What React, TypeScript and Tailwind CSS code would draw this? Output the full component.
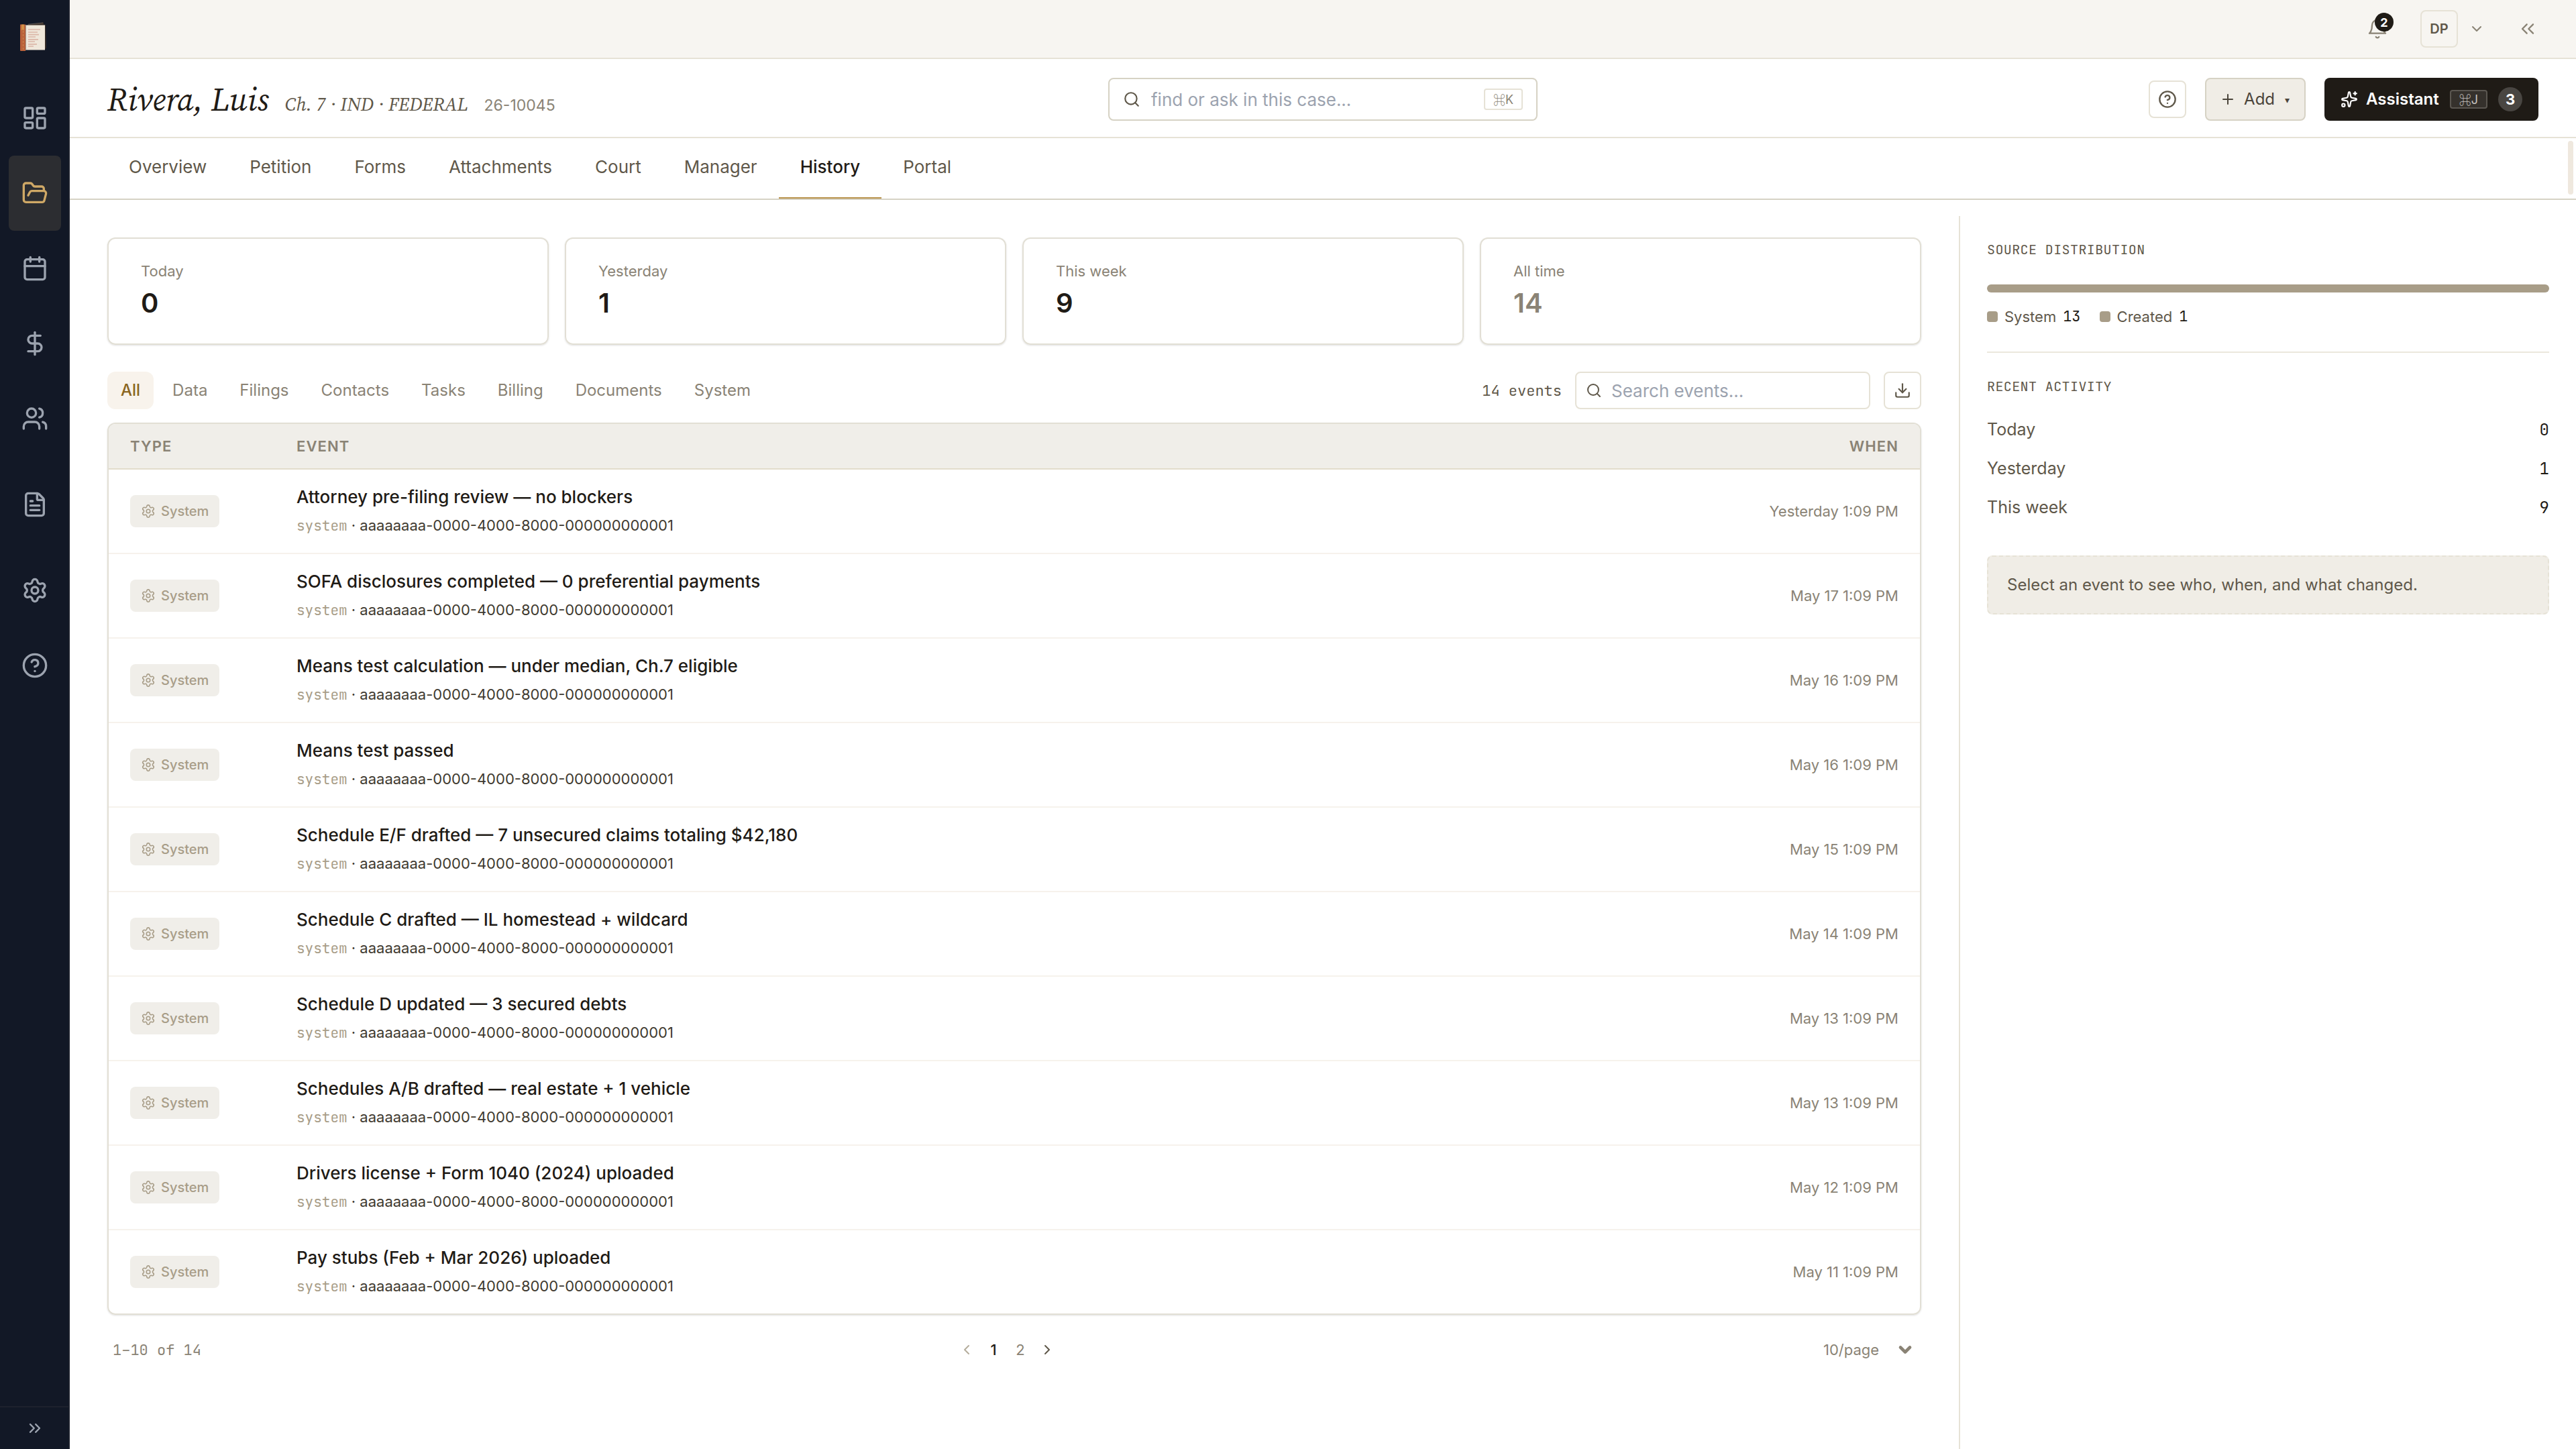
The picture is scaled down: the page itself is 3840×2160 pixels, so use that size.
import { useId, useState } from "react";
import {
    Calendar,
    ChevronDown,
    ChevronLeft,
    ChevronRight,
    ChevronsLeft,
    ChevronsRight,
    CircleQuestionMark,
    DollarSign,
    Download,
    FileText,
    FolderOpen,
    LayoutDashboard,
    Plus,
    Search,
    Settings,
    Sparkles,
    Users,
} from "lucide-react";
import { clsx } from "clsx";

const mono = "font-['JetBrains_Mono','DejaVu_Sans_Mono',monospace]";
const serif = "font-['Source_Serif_4','Noto_Serif','Liberation_Serif',serif]";

const navItems = [
    { name: "Dashboard", icon: LayoutDashboard },
    { name: "Cases", icon: FolderOpen, active: true },
    { name: "Calendar", icon: Calendar },
    { name: "Billing", icon: DollarSign },
    { name: "Contacts", icon: Users },
    { name: "Documents", icon: FileText, spaced: true },
    { name: "Settings", icon: Settings, spaced: true },
    { name: "Help", icon: CircleQuestionMark },
];

const tabs = ["Overview", "Petition", "Forms", "Attachments", "Court", "Manager", "History", "Portal"];

const stats = [
    { label: "Today", value: 0 },
    { label: "Yesterday", value: 1 },
    { label: "This week", value: 9 },
    { label: "All time", value: 14, muted: true },
];

const filters = ["All", "Data", "Filings", "Contacts", "Tasks", "Billing", "Documents", "System"];

const events = [
    { title: "Attorney pre-filing review — no blockers", when: "Yesterday 1:09 PM" },
    { title: "SOFA disclosures completed — 0 preferential payments", when: "May 17 1:09 PM" },
    { title: "Means test calculation — under median, Ch.7 eligible", when: "May 16 1:09 PM" },
    { title: "Means test passed", when: "May 16 1:09 PM" },
    { title: "Schedule E/F drafted — 7 unsecured claims totaling $42,180", when: "May 15 1:09 PM" },
    { title: "Schedule C drafted — IL homestead + wildcard", when: "May 14 1:09 PM" },
    { title: "Schedule D updated — 3 secured debts", when: "May 13 1:09 PM" },
    { title: "Schedules A/B drafted — real estate + 1 vehicle", when: "May 13 1:09 PM" },
    { title: "Drivers license + Form 1040 (2024) uploaded", when: "May 12 1:09 PM" },
    { title: "Pay stubs (Feb + Mar 2026) uploaded", when: "May 11 1:09 PM" },
];

const ACTOR_ID = "aaaaaaaa-0000-4000-8000-000000000001";

function Logo() {
    return (
        <svg viewBox="0 0 40 44" className="h-11 w-10" aria-hidden="true">
            <path d="M10 5 35 1.500v3l3 .5 1 34-2 3H9z" fill="#3a2f28" />
            <path d="M12 4.200 34 2" stroke="#8c8177" strokeWidth=".6" />
            <path d="M8 5.500h29v37H8z" fill="#efe7da" />
            <path d="M0 4.500h8V44H1a1 1 0 0 1-1-1z" fill="#b9613a" />
            <path d="M2 4.500h4v9l-2-1.500-2 1.500z" fill="#d29045" />
            <path d="M4.500 14v28" stroke="#cf8a4e" strokeWidth="1" strokeDasharray="3 2" />
            <path d="M8.500 5v38" stroke="#8f8377" strokeWidth=".8" />
            <path
                d="M12 12h18M12 16h14M12 19.700h16M12 23h11M12 26.800h15M12 30h10M12 33.800h13M12 37h8"
                stroke="#dcb7a8"
                strokeWidth="1.700"
            />
        </svg>
    );
}

// the badge covers the upper right of the bell
function BellIcon() {
    return (
        <svg
            viewBox="0 0 24 24"
            className="size-8"
            fill="none"
            stroke="currentColor"
            strokeWidth="1.75"
            strokeLinecap="round"
            strokeLinejoin="round"
            aria-hidden="true"
        >
            <path d="M6 8a6 6 0 0 1 12 0c0 7 3 9 3 9H3s3-2 3-9" />
            <path d="M10.300 21a1.940 1.940 0 0 0 3.400 0" />
        </svg>
    );
}

function CommandKey({ letter }: { letter: string }) {
    return (
        <>
            <span className="font-['Noto_Sans_CJK_SC',sans-serif]">⌘</span>
            <span className="font-['Inter',sans-serif]">{letter}</span>
        </>
    );
}

function Sidebar() {
    return (
        <aside className="flex w-[104px] shrink-0 flex-col bg-[#121826] shadow-[inset_-2px_0_#1d212d]">
            <div className="h-[120px] shrink-0 pt-8 pl-[30px]">
                <Logo />
            </div>
            <nav className="flex flex-1 flex-col px-[13px]">
                {navItems.map((item) => {
                    const Icon = item.icon;
                    return (
                        <a
                            key={item.name}
                            href="#"
                            aria-label={item.name}
                            className={clsx(
                                "flex h-28 items-center justify-center rounded-lg",
                                item.spaced && "mt-4",
                                item.active ? "bg-[#2c2d31] text-[#cfa866]" : "text-[#9ca3af]"
                            )}
                        >
                            <Icon className="size-10" strokeWidth={2} />
                        </a>
                    );
                })}
            </nav>
            <button
                aria-label="Expand sidebar"
                className="flex h-16 items-center justify-center border-t-2 border-[#1d212d] text-[#9ca3af]"
            >
                <ChevronsRight className="size-7" />
            </button>
        </aside>
    );
}

function TopBar() {
    return (
        <div className="flex h-[88px] items-center justify-end border-b-2 border-[#e6e2d6] bg-[#f7f5f1] pr-14">
            <button aria-label="Notifications" className="relative mr-12 text-[#8a8375]">
                <BellIcon />
                <span className="absolute -top-2 left-3 flex size-7 items-center justify-center rounded-full bg-[#1f1b16] text-[18px] font-bold text-white">
                    2
                </span>
            </button>
            <button className="flex items-center gap-4 text-[#8a8375]">
                <span className="flex size-14 items-center justify-center rounded-lg border-2 border-[#e6e2d6] text-[20px] font-semibold text-[#5f584a]">
                    DP
                </span>
                <ChevronDown className="size-6" />
            </button>
            <button aria-label="Collapse panel" className="ml-12 text-[#8a8375]">
                <ChevronsLeft className="size-8" strokeWidth={1.75} />
            </button>
        </div>
    );
}

function CaseHeader() {
    const id = useId();
    return (
        <header className="grid h-[118px] grid-cols-[1fr_640px_1fr] items-center border-b-2 border-[#e6e2d6] px-14 pt-1">
            <div className="flex items-baseline gap-6">
                <h1 className={clsx(serif, "text-[48px] italic text-[#1f1b16]")}>Rivera, Luis</h1>
                <p className={clsx(serif, "text-[28px] italic text-[#5f584a]")}>Ch. 7 · IND · FEDERAL</p>
                <p className="text-[23px] text-[#8a8375]">26-10045</p>
            </div>
            <div className="flex h-16 items-center rounded-lg border-2 border-[#d6d2c4] px-5">
                <label htmlFor={id} aria-label="Find or ask in this case">
                    <Search className="size-[26px] text-[#5f584a]" />
                </label>
                <input
                    id={id}
                    type="text"
                    placeholder="find or ask in this case..."
                    className="ml-4 min-w-0 flex-1 text-[26px] outline-none placeholder:text-[#9ca3af]"
                />
                <kbd className="flex h-8 items-center rounded border-2 border-[#e6e2d6] px-3 text-[18px] text-[#8a8375]">
                    <CommandKey letter="K" />
                </kbd>
            </div>
            <div className="flex items-center justify-end gap-7">
                <button
                    aria-label="Help"
                    className="flex size-14 items-center justify-center rounded-lg border-2 border-[#e6e2d6] text-[#5f584a]"
                >
                    <CircleQuestionMark className="size-7" />
                </button>
                <button className="flex h-16 items-center gap-3 rounded-lg border-2 border-[#d6d2c4] bg-[#f0ede6] px-5 text-[24px] text-[#4a443a]">
                    <Plus className="size-6" />
                    <span>Add</span>
                    <span className="w-3 text-center text-[14px]">▾</span>
                </button>
                <button className="flex h-16 items-center gap-4 rounded-lg bg-[#1f1b16] px-6 text-[24px] font-semibold text-white">
                    <span className="flex items-center gap-3">
                        <Sparkles className="size-[26px]" />
                        Assistant
                    </span>
                    <kbd className="flex h-7 items-center rounded border-2 border-[#5b5751] bg-[#35312c] px-3 text-[18px] font-normal text-[#c5c3c0]">
                        <CommandKey letter="J" />
                    </kbd>
                    <span className="flex size-9 items-center justify-center rounded-full bg-[#494642] text-[22px] font-bold">
                        3
                    </span>
                </button>
            </div>
        </header>
    );
}

function Tabs() {
    const [active, setActive] = useState("History");
    return (
        <nav className="flex h-[92px] justify-between border-b-2 border-[#d6d2c4] pl-14 pr-1">
            <div className="flex">
                {tabs.map((tab) => (
                    <button
                        key={tab}
                        onClick={() => setActive(tab)}
                        className={clsx(
                            "border-b-2 px-8 pb-1 text-[26px]",
                            active === tab
                                ? "border-[#b8924a] font-medium text-[#1f1b16]"
                                : "border-transparent text-[#5f584a]"
                        )}
                    >
                        {tab}
                    </button>
                ))}
            </div>
            <span className="mt-1 h-20 w-2 rounded bg-[#efe8de]" />
        </nav>
    );
}

function Stats() {
    return (
        <dl className="grid grid-cols-4 gap-6">
            {stats.map((stat) => (
                <div
                    key={stat.label}
                    className="flex h-40 flex-col justify-center rounded-xl border-2 border-[#e2dfd5] px-12 shadow-sm"
                >
                    <dt className="text-[22px] leading-8 text-[#8a8375]">{stat.label}</dt>
                    <dd
                        className={clsx(
                            "mt-1 text-[40px] leading-[56px] font-semibold",
                            stat.muted ? "text-[#8a8375]" : "text-[#1f1b16]"
                        )}
                    >
                        {stat.value}
                    </dd>
                </div>
            ))}
        </dl>
    );
}

function Toolbar() {
    const id = useId();
    const [active, setActive] = useState("All");
    return (
        <div className="mt-10 flex h-14 items-center justify-between">
            <div className="flex gap-2">
                {filters.map((filter) => (
                    <button
                        key={filter}
                        onClick={() => setActive(filter)}
                        className={clsx(
                            "h-14 rounded-xl px-5 text-[24px]",
                            active === filter ? "bg-[#f8f3ec] font-medium text-[#8a6520]" : "text-[#8a8375]"
                        )}
                    >
                        {filter}
                    </button>
                ))}
            </div>
            <div className="flex items-center gap-5">
                <span className={clsx(mono, "text-[22px] text-[#5f584a]")}>14 events</span>
                <div className="flex h-14 w-[440px] items-center rounded-lg border-2 border-[#e6e2d6] pl-3.5">
                    <label htmlFor={id} aria-label="Search events">
                        <Search className="size-6 text-[#5f584a]" />
                    </label>
                    <input
                        id={id}
                        type="text"
                        placeholder="Search events..."
                        className="ml-3.5 min-w-0 flex-1 text-[26px] outline-none placeholder:text-[#9ca3af]"
                    />
                </div>
                <button
                    aria-label="Download"
                    className="flex size-14 items-center justify-center rounded-lg border-2 border-[#e6e2d6] text-[#5f584a]"
                >
                    <Download className="size-[26px]" />
                </button>
            </div>
        </div>
    );
}

function EventTable() {
    return (
        <div className="mt-5 overflow-hidden rounded-xl border-2 border-[#e2dfd5] shadow-sm">
            <table className="w-full border-separate border-spacing-0 text-left">
                <thead className="bg-[#f0eee9] text-[22px] tracking-wider text-[#8a8375]">
                    <tr className="*:h-[68px] *:border-b-2 *:border-[#e2dccb] *:font-semibold">
                        <th className="w-[248px] pl-8">TYPE</th>
                        <th className="pl-8">EVENT</th>
                        <th className="pr-8 text-right">WHEN</th>
                    </tr>
                </thead>
                <tbody>
                    {events.map((event) => (
                        <tr
                            key={event.title}
                            className="*:h-[126px] *:border-b-2 *:border-[#f6f2ec] last:*:h-[124px] last:*:border-b-0"
                        >
                            <td className="pl-8">
                                <span className="inline-flex h-12 items-center gap-2 rounded-lg bg-[#f0eee9] px-4 align-middle text-[20px] font-medium text-[#a89d88]">
                                    <Settings className="size-[22px]" strokeWidth={1.75} />
                                    System
                                </span>
                            </td>
                            <td className="pl-8">
                                <p className="text-[26px] leading-9 font-medium text-[#1f1b16]">{event.title}</p>
                                <p className="mt-1.5 text-[22px] leading-9 text-[#3f3a30]">
                                    <span className={clsx(mono, "text-[21px] text-[#a89d88]")}>system</span> · {ACTOR_ID}
                                </p>
                            </td>
                            <td className="pr-8 text-right text-[22px] text-[#8a8375]">{event.when}</td>
                        </tr>
                    ))}
                </tbody>
            </table>
        </div>
    );
}

function Pagination() {
    return (
        <div className="mt-5 flex h-16 items-center justify-between px-2 text-[22px] text-[#8a8375]">
            <span className={mono}>1–10 of 14</span>
            <div className="flex items-center gap-4 *:flex *:w-6 *:justify-center">
                <button aria-label="Previous page" className="text-[#b5ad9c]">
                    <ChevronLeft className="size-6" />
                </button>
                <button className="font-medium text-[#1f1b16]">1</button>
                <button>2</button>
                <button aria-label="Next page" className="text-[#5f584a]">
                    <ChevronRight className="size-6" />
                </button>
            </div>
            <div className="relative flex items-center">
                <select aria-label="Rows per page" className="w-[154px] appearance-none pl-4 outline-none">
                    <option>10/page</option>
                    <option>25/page</option>
                </select>
                <ChevronDown className="pointer-events-none absolute right-0.5 size-7" strokeWidth={4} />
            </div>
        </div>
    );
}

function DetailPanel() {
    const heading = clsx(mono, "text-[20px] leading-8 tracking-[0.02em] text-[#5f584a]");
    return (
        <aside className="mt-6 w-[920px] shrink-0 border-l-2 border-[#e6e2d6] px-10 pt-[34px]">
            <section className="border-b-2 border-[#ebe8dd] pb-9">
                <h2 className={heading}>SOURCE DISTRIBUTION</h2>
                <div className="mt-9 h-3 rounded-md bg-[#a89d88]" />
                <div className="mt-5 flex gap-7 text-[22px] leading-8 text-[#5f584a]">
                    {[
                        { label: "System", count: 13 },
                        { label: "Created", count: 1 },
                    ].map((source) => (
                        <span key={source.label} className="flex items-center gap-2.5">
                            <span className="size-4 rounded bg-[#a89d88]" />
                            {source.label}
                            <span className={clsx(mono, "text-[#1f1b16]")}>{source.count}</span>
                        </span>
                    ))}
                </div>
            </section>
            <section className="pt-[34px]">
                <h2 className={heading}>RECENT ACTIVITY</h2>
                <dl className="mt-5">
                    {stats.slice(0, 3).map((stat) => (
                        <div key={stat.label} className="flex h-[58px] items-center justify-between text-[25px]">
                            <dt className="text-[#5f584a]">{stat.label}</dt>
                            <dd className={clsx(mono, "text-[24px] text-[#1f1b16]")}>{stat.value}</dd>
                        </div>
                    ))}
                </dl>
            </section>
            <p className="mt-[42px] flex h-[88px] items-center rounded-lg border-2 border-dashed border-[#e6e2d6] bg-[#f0ede6] px-7 text-[24px] text-[#5f584a]">
                Select an event to see who, when, and what changed.
            </p>
        </aside>
    );
}

export default function App() {
    return (
        <div className="flex min-h-screen bg-white font-['Inter',sans-serif] text-[#1f1b16]">
            <Sidebar />
            <div className="flex min-w-0 flex-1 flex-col">
                <TopBar />
                <CaseHeader />
                <Tabs />
                <div className="flex flex-1">
                    <main className="min-w-0 flex-1 px-14 pt-14">
                        <Stats />
                        <Toolbar />
                        <EventTable />
                        <Pagination />
                    </main>
                    <DetailPanel />
                </div>
            </div>
        </div>
    );
}
